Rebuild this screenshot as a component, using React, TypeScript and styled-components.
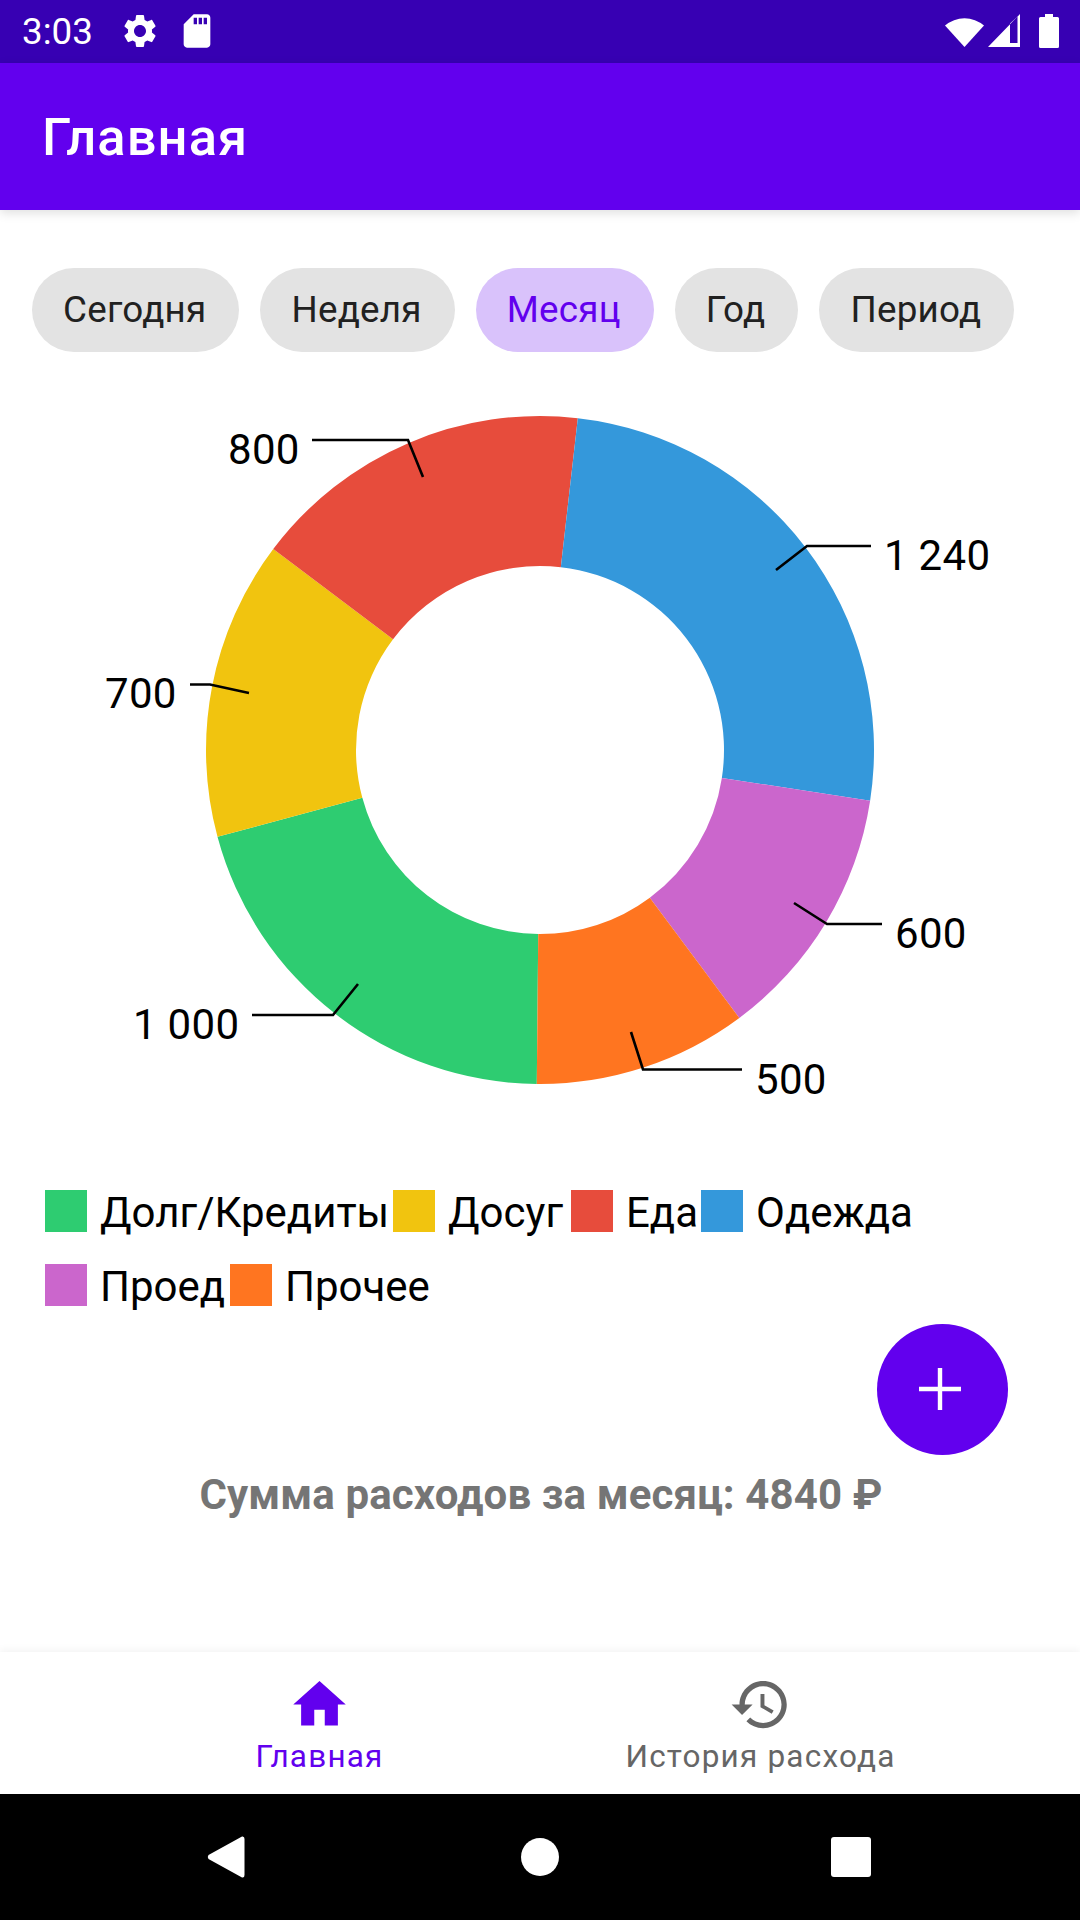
import React from "react";
import styled, { createGlobalStyle } from "styled-components";

const GlobalStyle = createGlobalStyle`
  html, body {
    margin: 0;
    padding: 0;
    background: #fff;
  }
  * {
    box-sizing: border-box;
  }
`;

const CX = 540;
const CY = 750;
const R_OUT = 334;
const R_IN = 184;

const slices = [
  { label: "Долг/Кредиты", value: 1000, color: "#2ecc71", legendWidth: 348 },
  { label: "Досуг", value: 700, color: "#f1c40f", legendWidth: 178 },
  { label: "Еда", value: 800, color: "#e74c3c", legendWidth: 130 },
  { label: "Одежда", value: 1240, color: "#3498db", legendWidth: 240 },
  { label: "Проед", value: 600, color: "#cb66cc", legendWidth: 185 },
  { label: "Прочее", value: 500, color: "#ff7520", legendWidth: 220 },
];

const callouts = [
  { text: "1 000", x: 133, y: 1039, line: "252,1015 333,1015 358,984" },
  { text: "700", x: 105, y: 708, line: "190,684.5 210,684.5 249,693" },
  { text: "800", x: 228, y: 464, line: "312,440 408,440 423,477" },
  { text: "1 240", x: 884, y: 570, line: "871,546 807,546 776,570" },
  { text: "600", x: 895, y: 948, line: "882,924 827,924 794,903" },
  { text: "500", x: 755, y: 1094, line: "742,1069.5 643,1069.5 631,1032" },
];

const chips = ["Сегодня", "Неделя", "Месяц", "Год", "Период"];

const polar = (r: number, deg: number) => {
  const a = (deg * Math.PI) / 180;
  return `${(CX + r * Math.sin(a)).toFixed(2)} ${(CY - r * Math.cos(a)).toFixed(2)}`;
};

const slicePath = (from: number, to: number) => {
  const large = to - from > 180 ? 1 : 0;
  return `M${polar(R_OUT, from)} A${R_OUT} ${R_OUT} 0 ${large} 1 ${polar(R_OUT, to)} L${polar(R_IN, to)} A${R_IN} ${R_IN} 0 ${large} 0 ${polar(R_IN, from)} Z`;
};

const Donut = () => {
  const total = slices.reduce((s, x) => s + x.value, 0);
  let angle = 180.55;
  return (
    <ChartSvg viewBox="0 352 1080 804">
      {slices.map((s) => {
        const from = angle;
        angle += (s.value / total) * 360;
        return <path key={s.label} d={slicePath(from, angle)} fill={s.color} />;
      })}
      {callouts.map((c) => (
        <g key={c.text}>
          <polyline points={c.line} fill="none" stroke="#000" strokeWidth={2.6} />
          <ChartLabel x={c.x} y={c.y}>
            {c.text}
          </ChartLabel>
        </g>
      ))}
    </ChartSvg>
  );
};

const App = () => {
  return (
    <Screen>
      <GlobalStyle />
      <StatusBar>
        <StatusLeft>
          <Clock>3:03</Clock>
          <StatusIcon viewBox="0 0 24 24">
            <path d="M19.14 12.94c.04-.3.06-.61.06-.94 0-.32-.02-.64-.07-.94l2.03-1.58c.18-.14.23-.41.12-.61l-1.92-3.32c-.12-.22-.37-.29-.59-.22l-2.39.96c-.5-.38-1.03-.7-1.62-.94l-.36-2.54c-.04-.24-.24-.41-.48-.41h-3.84c-.24 0-.43.17-.47.41l-.36 2.54c-.59.24-1.13.57-1.62.94l-2.39-.96c-.22-.08-.47 0-.59.22L2.74 8.87c-.12.21-.08.47.12.61l2.03 1.58c-.05.3-.09.63-.09.94s.02.64.07.94l-2.03 1.58c-.18.14-.23.41-.12.61l1.92 3.32c.12.22.37.29.59.22l2.39-.96c.5.38 1.03.7 1.62.94l.36 2.54c.05.24.24.41.48.41h3.84c.24 0 .44-.17.47-.41l.36-2.54c.59-.24 1.13-.56 1.62-.94l2.39.96c.22.08.47 0 .59-.22l1.92-3.32c.12-.22.07-.47-.12-.61l-2.01-1.58zM12 15.6c-1.98 0-3.6-1.62-3.6-3.6s1.62-3.6 3.6-3.6 3.6 1.62 3.6 3.6-1.62 3.6-3.6 3.6z" />
          </StatusIcon>
          <StatusIcon viewBox="0 0 24 24">
            <path d="M18 2h-8L4.02 8 4 20c0 1.1.9 2 2 2h12c1.1 0 2-.9 2-2V4c0-1.1-.9-2-2-2zm-6 6h-2V4h2v4zm3 0h-2V4h2v4zm3 0h-2V4h2v4z" />
          </StatusIcon>
        </StatusLeft>
        <StatusRight viewBox="0 0 114 34">
          {/* wifi, signal and battery share one strip */}
          <path d="M0 11.5 A30 30 0 0 1 39 11.5 L19.5 33 Z" />
          <path fillRule="evenodd" d="M43 33 L75 0 L75 33 Z M65 9.5 L65 29 L72.5 29 L72.5 2.5 Z" />
          <path d="M94 4.5 a1.5 1.5 0 0 1 1.5-1.5 h4.5 v-3 h8 v3 h4.5 a1.5 1.5 0 0 1 1.5 1.5 v28 a1.5 1.5 0 0 1-1.5 1.5 h-17 a1.5 1.5 0 0 1-1.5-1.5 Z" />
        </StatusRight>
      </StatusBar>

      <AppBar>
        <Title>Главная</Title>
      </AppBar>

      <Content>
        <ChipRow>
          {chips.map((c) => (
            <Chip key={c} $active={c === "Месяц"}>
              {c}
            </Chip>
          ))}
        </ChipRow>

        <Donut />

        <Legend>
          {slices.map((s) => (
            <LegendItem key={s.label} $width={s.legendWidth}>
              <Swatch $color={s.color} />
              <LegendText>{s.label}</LegendText>
            </LegendItem>
          ))}
        </Legend>

        <FabRow>
          <Fab>
            <PlusIcon viewBox="0 0 42 42">
              <path d="M18.8 0h4.4v18.8H42v4.4H23.2V42h-4.4V23.2H0v-4.4h18.8z" />
            </PlusIcon>
          </Fab>
        </FabRow>

        <Total>Сумма расходов за месяц: 4840 ₽</Total>
      </Content>

      <BottomNav>
        <NavItem>
          <NavIcon viewBox="0 0 24 24" $active>
            <path d="M10 20v-6h4v6h5v-8h3L12 3 2 12h3v8z" />
          </NavIcon>
          <NavLabel $active>Главная</NavLabel>
        </NavItem>
        <NavItem>
          <NavIcon viewBox="0 0 24 24">
            <path d="M13 3c-4.97 0-9 4.03-9 9H1l3.89 3.89.07.14L9 12H6c0-3.87 3.13-7 7-7s7 3.13 7 7-3.13 7-7 7c-1.93 0-3.68-.79-4.94-2.06l-1.42 1.42C8.27 19.99 10.51 21 13 21c4.97 0 9-4.03 9-9s-4.03-9-9-9zm-1 5v5l4.28 2.54.72-1.21-3.5-2.08V8H12z" />
          </NavIcon>
          <NavLabel>История расхода</NavLabel>
        </NavItem>
      </BottomNav>

      <SystemNav>
        <BackIcon viewBox="0 0 38 42">
          <path d="M35 0.5 Q37.5 0 37.5 3 V39 Q37.5 42 35 41.5 L1.5 23 Q0 21 1.5 19 Z" />
        </BackIcon>
        <HomeDot />
        <RecentSquare />
      </SystemNav>
    </Screen>
  );
};

export default App;

const Screen = styled.div`
  width: 1080px;
  height: 1920px;
  display: flex;
  flex-direction: column;
  overflow: hidden;
  background: #fff;
  font-family: Roboto, "Noto Sans", sans-serif;
`;

const StatusBar = styled.div`
  height: 63px;
  flex: none;
  display: flex;
  align-items: flex-start;
  justify-content: space-between;
  background: #3700b3;
  padding: 0 21px 0 22px;
`;

const StatusLeft = styled.div`
  display: flex;
  align-items: center;
  height: 63px;
`;

const Clock = styled.span`
  color: #fff;
  font-size: 36.75px;
  width: 98px;
`;

const StatusIcon = styled.svg`
  width: 40px;
  height: 40px;
  fill: #fff;
  margin-right: 17px;
  margin-top: -1px;
`;

const StatusRight = styled.svg`
  width: 114px;
  height: 34px;
  margin-top: 14px;
  fill: #fff;
`;

const AppBar = styled.div`
  height: 147px;
  flex: none;
  display: flex;
  align-items: center;
  padding-left: 42px;
  background: #6200ee;
  box-shadow: 0 3px 10px rgba(0, 0, 0, 0.13);
  position: relative;
  z-index: 1;
`;

const Title = styled.h1`
  margin: 0;
  color: #fff;
  font-size: 52.5px;
  font-weight: 500;
  letter-spacing: 1.1px;
`;

const Content = styled.div`
  flex: 1;
  display: flex;
  flex-direction: column;
  min-height: 0;
`;

const ChipRow = styled.div`
  display: flex;
  gap: 21px;
  padding: 58px 0 0 32px;
`;

const Chip = styled.div<{ $active?: boolean }>`
  height: 84px;
  padding: 0 33px 1px 31px;
  display: flex;
  align-items: center;
  border-radius: 42px;
  font-size: 36.75px;
  letter-spacing: 0.25px;
  background: ${(p) => (p.$active ? "#d9c2fb" : "#e3e3e3")};
  color: ${(p) => (p.$active ? "#6200ee" : "#212121")};
`;

const ChartSvg = styled.svg`
  display: block;
  width: 1080px;
  height: 804px;
  flex: none;
`;

const ChartLabel = styled.text`
  font-family: Roboto, sans-serif;
  font-size: 42px;
  letter-spacing: 0.3px;
  fill: #000;
`;

const Legend = styled.div`
  display: flex;
  flex-wrap: wrap;
  width: 1000px;
  margin: 34px 0 0 45px;
  row-gap: 32px;
`;

const LegendItem = styled.div<{ $width: number }>`
  display: flex;
  align-items: center;
  width: ${(p) => p.$width}px;
  height: 42px;
  gap: 13px;
`;

const Swatch = styled.span<{ $color: string }>`
  width: 42px;
  height: 42px;
  flex: none;
  background: ${(p) => p.$color};
`;

const LegendText = styled.span`
  font-size: 42px;
  padding-top: 2px;
  white-space: nowrap;
  color: #000;
`;

const FabRow = styled.div`
  display: flex;
  justify-content: flex-end;
  padding-right: 72px;
  margin-top: 18px;
`;

const Fab = styled.div`
  width: 131px;
  height: 131px;
  border-radius: 50%;
  background: #6200ee;
  display: flex;
  align-items: center;
  justify-content: center;
`;

const PlusIcon = styled.svg`
  width: 42px;
  height: 42px;
  margin: 0 5px 1px 0;
  fill: #fff;
`;

const Total = styled.div`
  margin-top: 15px;
  padding-left: 2px;
  text-align: center;
  font-size: 42px;
  letter-spacing: 0.12px;
  font-weight: 700;
  color: #757575;
`;

const BottomNav = styled.nav`
  height: 142px;
  flex: none;
  display: flex;
  justify-content: center;
  background: #fff;
  box-shadow: 0 -2px 8px rgba(0, 0, 0, 0.05);
`;

const NavItem = styled.div`
  width: 441px;
  display: flex;
  flex-direction: column;
  align-items: center;
  padding-top: 21px;
`;

const NavIcon = styled.svg<{ $active?: boolean }>`
  width: 63px;
  height: 63px;
  fill: ${(p) => (p.$active ? "#6200ee" : "#666")};
`;

const NavLabel = styled.span<{ $active?: boolean }>`
  font-size: 31.5px;
  letter-spacing: 1.2px;
  margin-top: 2px;
  color: ${(p) => (p.$active ? "#6200ee" : "#666")};
`;

const SystemNav = styled.div`
  height: 126px;
  flex: none;
  background: #000;
  display: flex;
  align-items: center;
  padding-left: 207px;
`;

const BackIcon = styled.svg`
  width: 38px;
  height: 42px;
  margin-right: 276px;
  fill: #fff;
`;

const HomeDot = styled.div`
  width: 38px;
  height: 38px;
  margin-right: 272px;
  border-radius: 50%;
  background: #fff;
`;

const RecentSquare = styled.div`
  width: 40px;
  height: 40px;
  border-radius: 3px;
  background: #fff;
`;
